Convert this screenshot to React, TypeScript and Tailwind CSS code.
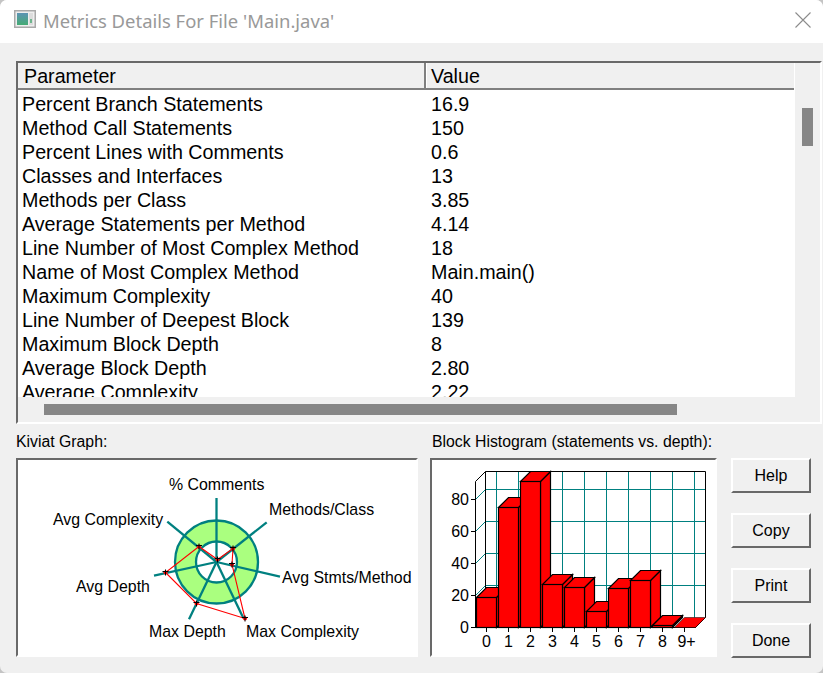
const rows: [string, string][] = [
  ["Percent Branch Statements", "16.9"],
  ["Method Call Statements", "150"],
  ["Percent Lines with Comments", "0.6"],
  ["Classes and Interfaces", "13"],
  ["Methods per Class", "3.85"],
  ["Average Statements per Method", "4.14"],
  ["Line Number of Most Complex Method", "18"],
  ["Name of Most Complex Method", "Main.main()"],
  ["Maximum Complexity", "40"],
  ["Line Number of Deepest Block", "139"],
  ["Maximum Block Depth", "8"],
  ["Average Block Depth", "2.80"],
  ["Average Complexity", "2.22"],
];

const sans = "font-['Liberation_Sans',Arial,sans-serif]";

function Kiviat() {
  const c = [216.5, 562];
  const spokes = [
    [216.5, 498],
    [266.7, 522.3],
    [280, 576.7],
    [243.3, 618],
    [189, 619.3],
    [154, 575.7],
    [167.3, 521.7],
  ];
  const pts = [
    [217.5, 559.5],
    [233, 548.5],
    [232, 564.5],
    [245, 618.5],
    [196.5, 603.5],
    [165.5, 572.5],
    [199, 546.5],
  ];
  const ox = 18;
  const oy = 460;
  return (
    <svg width="398" height="195" viewBox={`${ox} ${oy} 398 195`} className="block">
      <circle cx={c[0]} cy={c[1]} r="41.5" fill="#aaff7f" stroke="#008080" strokeWidth="2.3" />
      <circle cx={c[0]} cy={c[1]} r="20.5" fill="#fff" stroke="#008080" strokeWidth="2.3" />
      {spokes.map((s, i) => (
        <line key={i} x1={c[0]} y1={c[1]} x2={s[0]} y2={s[1]} stroke="#008080" strokeWidth="2.3" />
      ))}
      <polygon points={pts.map((p) => p.join(",")).join(" ")} fill="none" stroke="#ff0000" strokeWidth="1.1" />
      {pts.map((p, i) => (
        <g key={i}>
          <circle cx={p[0]} cy={p[1]} r="2" fill="#ff0000" />
          <path
            d={`M${p[0] - 3} ${p[1] - 1}H${p[0] + 3}M${p[0]} ${p[1] - 3}V${p[1] + 3}`}
            stroke="#000"
            strokeWidth="1"
            fill="none"
          />
        </g>
      ))}
      <g fontFamily="'Liberation Sans',Arial,sans-serif" fontSize="15.9" fill="#000">
        <text x="169" y="490">% Comments</text>
        <text x="269" y="515">Methods/Class</text>
        <text x="53" y="525">Avg Complexity</text>
        <text x="282" y="583">Avg Stmts/Method</text>
        <text x="76" y="592">Avg Depth</text>
        <text x="149" y="637">Max Depth</text>
        <text x="246" y="637">Max Complexity</text>
      </g>
    </svg>
  );
}

function Histogram() {
  const ox = 432;
  const oy = 460;
  const vs = [496.5, 518.5, 540.5, 562.5, 584.5, 606.5, 628.5, 650.5, 672.5, 694.5];
  const hs = [489.5, 521.5, 553.5, 585.5];
  const tops = [597.5, 507.5, 481.5, 584.5, 587.5, 611.5, 588.5, 580.5, 625.5];
  const labels = ["0", "1", "2", "3", "4", "5", "6", "7", "8", "9+"];
  const base = 627.5;
  return (
    <svg width="283" height="195" viewBox={`${ox} ${oy} 283 195`} className="block">
      {vs.map((x) => (
        <line key={x} x1={x} y1="471.5" x2={x} y2="617.5" stroke="#008080" strokeWidth="1" />
      ))}
      {hs.map((y) => (
        <g key={y}>
          <line x1="485.5" y1={y} x2="705.5" y2={y} stroke="#008080" strokeWidth="1" />
          <line x1="475.5" y1={y + 10} x2="485.5" y2={y} stroke="#008080" strokeWidth="1" />
        </g>
      ))}
      <path d="M475.5 627.5V481.5L485.5 471.5H705.5V617.5L695.5 627.5" fill="none" stroke="#000" strokeWidth="1" />
      <path d="M485.5 471.5V617.5" fill="none" stroke="#000" strokeWidth="1" />
      <line x1="471" y1="627.5" x2="696" y2="627.5" stroke="#000" strokeWidth="1" />
      {tops.map((t, i) => {
        const l = 476.5 + 22 * i;
        const r = l + 20;
        return (
          <g key={i} fill="#ff0000" stroke="#000" strokeWidth="1.2">
            <path d={`M${r} ${t}L${r + 10} ${t - 10}V${base - 10}L${r} ${base}Z`} />
            <path d={`M${l} ${t}L${l + 10} ${t - 10}H${r + 10}L${r} ${t}Z`} />
            <rect x={l} y={t} width="20" height={base - t} />
          </g>
        );
      })}
      <path d="M674.5 627.5L684.5 617.5H705.5L695.5 627.5Z" fill="#ff0000" stroke="#000" strokeWidth="0.5" />
      {labels.map((_, i) => (
        <line key={i} x1={486.5 + 22 * i} y1="627.5" x2={486.5 + 22 * i} y2="632" stroke="#000" strokeWidth="1" />
      ))}
      {[80, 60, 40, 20, 0].map((v, i) => (
        <line key={v} x1="471" y1={499.5 + 32 * i} x2="475.5" y2={499.5 + 32 * i} stroke="#000" strokeWidth="1" />
      ))}
      <g fontFamily="'Liberation Sans',Arial,sans-serif" fontSize="16" fill="#000">
        {[80, 60, 40, 20, 0].map((v, i) => (
          <text key={v} x="469" y={505 + 32 * i} textAnchor="end">{v}</text>
        ))}
        {labels.map((l, i) => (
          <text key={l} x={i === 9 ? 686.5 : 486.5 + 22 * i} y="647" textAnchor="middle">{l}</text>
        ))}
      </g>
    </svg>
  );
}

function Sunken({ className, children }: { className: string; children?: React.ReactNode }) {
  return (
    <div className={`border-2 border-t-[#696969] border-l-[#696969] border-b-white border-r-white ${className}`}>
      {children}
    </div>
  );
}

export default function App() {
  return (
    <div className="h-[673px] w-[823px] bg-[#c4c4c4]">
      <div className={`${sans} flex h-[673px] w-[823px] flex-col overflow-hidden rounded-[7px] bg-[#f0f0f0] text-black`}>
        <div className="flex h-[43px] shrink-0 items-center bg-white pl-[14px] pr-[12px]">
          <svg width="22" height="18" viewBox="0 0 22 18" className="mb-[5px] mr-[7px] shrink-0">
            <defs>
              <linearGradient id="ig" x1="0" y1="0" x2="0" y2="1">
                <stop offset="0" stopColor="#5c93b4" />
                <stop offset="1" stopColor="#45ab74" />
              </linearGradient>
            </defs>
            <rect x="0.75" y="0.75" width="20.5" height="16.5" fill="#eeeeee" stroke="#a9a9a9" strokeWidth="1.5" />
            <rect x="3" y="3" width="11" height="12" fill="url(#ig)" />
            <rect x="15" y="3" width="4" height="12" fill="#dcdcdc" />
            <rect x="16" y="9" width="2" height="4" fill="#6fb58e" />
          </svg>
          <span className="flex-1 font-['Noto_Sans',sans-serif] text-[18.45px] leading-none text-[#999999]">
            Metrics Details For File 'Main.java'
          </span>
          <svg width="16" height="16" viewBox="0 0 16 16" className="mb-[4px]">
            <path d="M.5.5l15 15M15.500.5l-15 15" stroke="#8c8c8c" strokeWidth="1.1" fill="none" />
          </svg>
        </div>

        <div className="flex flex-1 flex-col px-[16px] pt-[18px]">
          <Sunken className="relative h-[363px] w-[806px] bg-white">
            <div className="flex h-[27px] w-[776px] border-b-2 border-[#808080] bg-[#f0f0f0] text-[19.7px] leading-[27px]">
              <div className="w-[408px] border-r-2 border-[#808080] pl-[6px]">Parameter</div>
              <div className="border-l border-white pl-[4px]">Value</div>
            </div>
            <div className="h-[308px] overflow-hidden pl-[4px] pt-[2px] text-[19.7px] leading-[24px]">
              {rows.map(([k, v]) => (
                <div key={k} className="flex h-[24px]">
                  <div className="w-[409px] whitespace-nowrap">{k}</div>
                  <div>{v}</div>
                </div>
              ))}
            </div>
            <div className="absolute right-0 top-0 flex h-full w-[25px] flex-col bg-[#f0f0f0] pl-[7px] pt-[45px]">
              <div className="h-[38px] w-[11px] bg-[#868686]" />
            </div>
            <div className="absolute bottom-0 left-0 h-[25px] w-[779px] bg-[#f0f0f0] pl-[26px] pt-[7px]">
              <div className="h-[11px] w-[633px] bg-[#868686]" />
            </div>
          </Sunken>

          <div className="mt-[7px] flex text-[15.8px] leading-[20px]">
            <div className="w-[416px] pt-[1px]">Kiviat Graph:</div>
            <div className="pt-[1px]">Block Histogram (statements vs. depth):</div>
          </div>

          <div className="mt-[6px] flex">
            <Sunken className="h-[199px] w-[402px] bg-white">
              <Kiviat />
            </Sunken>
            <Sunken className="ml-[12px] h-[199px] w-[287px] bg-white">
              <Histogram />
            </Sunken>
            <div className="ml-[14px] flex flex-col gap-[20px]">
              {["Help", "Copy", "Print", "Done"].map((b) => (
                <button
                  key={b}
                  className="h-[35px] w-[80px] border-2 border-t-white border-l-white border-b-[#696969] border-r-[#696969] bg-[#f0f0f0] text-[16px] leading-none"
                >
                  {b}
                </button>
              ))}
            </div>
          </div>
        </div>
      </div>
    </div>
  );
}
